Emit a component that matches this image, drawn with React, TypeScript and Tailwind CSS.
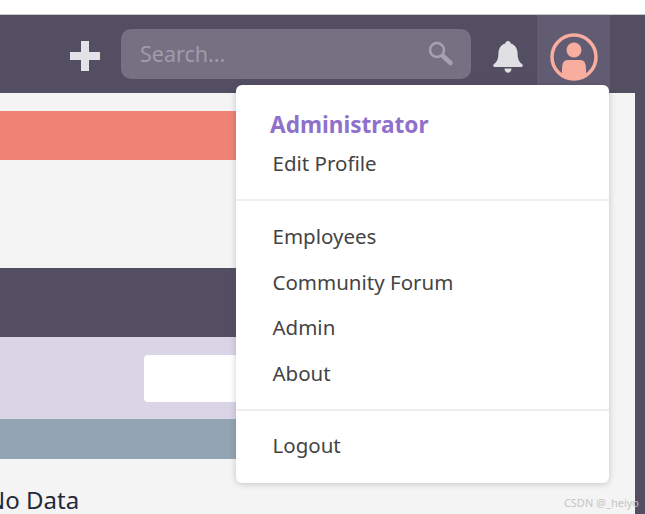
const menuLinks = ["Employees", "Community Forum", "Admin", "About"]

function BellIcon() {
  return (
    <svg width="30" height="32" viewBox="0 0 30 32" fill="#e0dfe4">
      <path d="M15 0c1.6 0 2.6 1.1 2.7 2.6C22.4 3.900 24.6 8 24.6 13c0 5 1.6 8 4.6 10.2.8.6.8 2.8-.8 2.8H1.6c-1.6 0-1.6-2.2-.8-2.8C3.8 21 5.400 18 5.400 13c0-5 2.200-9.100 6.900-10.400C12.400 1.100 13.400 0 15 0z" />
      <path d="M11.500 27.500h7c0 2.300-1.500 4.300-3.500 4.300s-3.500-2-3.500-4.300z" />
    </svg>
  )
}

function AvatarIcon() {
  return (
    <svg width="48" height="48" viewBox="0 0 48 48">
      <circle cx="24" cy="24" r="22" fill="none" stroke="#f9ad9f" strokeWidth="3.500" />
      <circle cx="24" cy="17" r="7.500" fill="#f9ad9f" />
      <path d="M12 41c0-9 0-14 6-14h12c6 0 6 5 6 14-3.500 2.500-8 4-12 4s-8.500-1.500-12-4z" fill="#f9ad9f" />
    </svg>
  )
}

function SearchGlass() {
  return (
    <svg width="25" height="25" viewBox="0 0 25 25" fill="none" stroke="#a5a1ae">
      <circle cx="9" cy="9" r="7" strokeWidth="2.500" />
      <path d="M15 15l7.500 7" strokeWidth="4.500" strokeLinecap="round" />
    </svg>
  )
}

export default function App() {
  return (
    <div className="relative h-[514px] w-[645px] overflow-hidden bg-white font-['Noto_Sans',sans-serif]">
      <div className="h-[15px] border-b border-[#c9c7cd] bg-white" />

      {/* Top bar */}
      <header className="flex h-[78px] items-stretch justify-end bg-[#544e63] pr-[35px]">
        <div className="flex items-center">
          <div className="relative mr-[21px] mt-[4px] h-[30px] w-[30px]">
            <div className="absolute left-0 top-[11px] h-[8px] w-[30px] bg-[#e3e2e7]" />
            <div className="absolute left-[11px] top-0 h-[30px] w-[8px] bg-[#e3e2e7]" />
          </div>
          <div className="flex h-[50px] w-[350px] items-center justify-between rounded-[10px] bg-[#767182] pl-[19px] pr-[18px]">
            <span className="text-[21.500px] text-[#9f9ba9]">Search...</span>
            <div className="-mt-[2px]">
              <SearchGlass />
            </div>
          </div>
          <div className="ml-[22px] mr-[14px] mt-[5px]">
            <BellIcon />
          </div>
        </div>
        <div className="flex w-[73px] items-center justify-center bg-[#625c72] pt-[6px]">
          <AvatarIcon />
        </div>
      </header>

      {/* Page body */}
      <div className="flex h-[421px]">
        <main className="flex-1 overflow-hidden bg-[#f4f4f4]">
          <div className="mr-[60px]">
            <div className="mt-[18px] h-[49px] bg-[#f08275]" />
            <div className="mt-[108px] h-[69px] bg-[#544e63]" />
            <div className="flex h-[82px] items-center bg-[#d9d4e6] pl-[144px]">
              <div className="h-[47px] w-[200px] rounded-[4px] bg-white" />
            </div>
            <div className="h-[40px] bg-[#93a5b2]" />
          </div>
          <p className="-ml-[13px] mt-[23px] text-[24px] leading-[36px] text-[#1f2a3a]">No Data</p>
        </main>
        <aside className="w-[10px] bg-[#544e63]" />
      </div>

      {/* Profile menu */}
      <div className="absolute left-[236px] top-[85px] w-[373px] rounded-[6px] bg-white pb-[15px] pt-[25px] shadow-[0_1px_6px_rgba(60,55,80,0.25)]">
        <div className="pb-[16px]">
          <p className="pl-[34px] text-[22.600px] font-bold leading-[30px] text-[#8f70cb]">Administrator</p>
          <a className="mt-[3px] block pl-[36.500px] text-[20.500px] leading-[40px] text-[#444444]">Edit Profile</a>
        </div>
        <div className="border-y-2 border-[#eeeeee] pb-[12px] pt-[13px]">
          {menuLinks.map((link) => (
            <a key={link} className="block pl-[36.500px] text-[20.500px] leading-[45.700px] text-[#444444]">
              {link}
            </a>
          ))}
        </div>
        <a className="mt-[12px] block pl-[36.500px] text-[20.500px] leading-[45px] text-[#444444]">Logout</a>
      </div>

      <span className="absolute right-[6px] top-[496px] text-[11px] leading-[14px] text-[#c4c4c4]">CSDN @_heiyo</span>
    </div>
  )
}
